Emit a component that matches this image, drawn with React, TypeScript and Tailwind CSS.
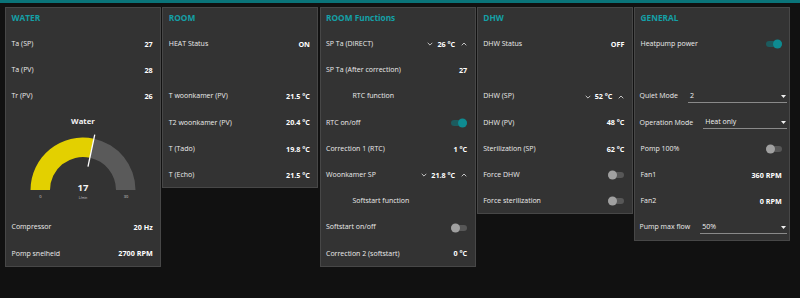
import type { ReactNode } from 'react';

const font = { fontFamily: '"Open Sans", "Liberation Sans", Arial, sans-serif' };

function Title({ children }: { children: ReactNode }) {
  return (
    <div className="flex h-[24.3px] items-center pb-[3px] pl-[5.5px] text-[8.3px] font-bold text-[#14a0a7]">
      {children}
    </div>
  );
}

function Row({ label, children }: { label?: string; children?: ReactNode }) {
  return (
    <div className="flex h-[24px] items-center justify-between pl-[5.5px] pr-[7.3px]">
      <span className="text-[7px] text-[#ececec]">{label}</span>
      {children}
    </div>
  );
}

function Value({ children }: { children: ReactNode }) {
  return <span className="text-[7.2px] font-bold text-white">{children}</span>;
}

function Chevron({ up }: { up?: boolean }) {
  return (
    <svg width="6" height="4" viewBox="0 0 6 4" className="text-[#d4d4d4]">
      <path
        d={up ? 'M0.7 3.3 L3 1 L5.3 3.3' : 'M0.7 0.8 L3 3.1 L5.3 0.8'}
        fill="none"
        stroke="currentColor"
        strokeWidth="0.9"
      />
    </svg>
  );
}

function Numeric({ value }: { value: string }) {
  return (
    <div className="flex items-center">
      <Chevron />
      <span className="ml-[4px] mr-[6px] text-[7.2px] font-bold text-white">{value}</span>
      <Chevron up />
    </div>
  );
}

function Toggle({ on }: { on?: boolean }) {
  return (
    <div className={`relative h-[6px] w-[16px] rounded-full ${on ? 'bg-[#1c5b5e]' : 'bg-[#575757]'}`}>
      <div
        className={`absolute top-1/2 h-[9px] w-[9px] -translate-y-1/2 rounded-full ${
          on ? 'right-0 bg-[#0e8b91]' : 'left-0 bg-[#a0a0a0]'
        }`}
      />
    </div>
  );
}

function Heading({ children }: { children: ReactNode }) {
  return (
    <div className="flex h-[24px] items-center pl-[32px] text-[7px] text-[#ececec]">{children}</div>
  );
}

function Dropdown({ label, value }: { label: string; value: string }) {
  return (
    <div className="flex h-[24px] items-center pl-[4.5px] pr-[2.5px]">
      <span className="text-[7px] text-[#ececec]">{label}</span>
      <div className="ml-[10px] flex h-[12px] flex-1 items-center justify-between border-b-[1.5px] border-[#8a8a8a] pl-[2px] pr-[1px]">
        <span className="text-[7px] text-[#f2f2f2]">{value}</span>
        <svg width="5" height="3" viewBox="0 0 5 3">
          <path d="M0 0 L5 0 L2.5 3 Z" fill="#f0f0f0" />
        </svg>
      </div>
    </div>
  );
}

function arc(cx: number, cy: number, R: number, r: number, a1: number, a2: number) {
  const p = (rad: number, a: number) => {
    const t = (a * Math.PI) / 180;
    return `${(cx + rad * Math.cos(t)).toFixed(2)} ${(cy - rad * Math.sin(t)).toFixed(2)}`;
  };
  return `M ${p(R, a1)} A ${R} ${R} 0 0 1 ${p(R, a2)} L ${p(r, a2)} A ${r} ${r} 0 0 0 ${p(r, a1)} Z`;
}

function Gauge() {
  const cx = 77;
  const cy = 79;
  const angle = 180 - (17 / 30) * 180;
  const t = (angle * Math.PI) / 180;
  return (
    <div className="h-[102.6px]">
      <svg width="154" height="103" viewBox="0 0 154 103">
        <text x={cx} y="13" textAnchor="middle" fontSize="7.8" fontWeight="bold" fill="#f2f2f2" style={font}>
          Water
        </text>
        <path d={arc(cx, cy, 52.5, 33, 180, angle)} fill="#e3d000" />
        <path d={arc(cx, cy, 52.5, 33, angle, 0)} fill="#5a5a5a" />
        <line
          x1={cx + 24 * Math.cos(t)}
          y1={cy - 24 * Math.sin(t)}
          x2={cx + 56.5 * Math.cos(t)}
          y2={cy - 56.5 * Math.sin(t)}
          stroke="#ffffff"
          strokeWidth="1.3"
        />
        <text x={cx} y="79.5" textAnchor="middle" fontSize="9.5" fontWeight="bold" fill="#f4f4f4" style={font}>
          17
        </text>
        <text x="34.5" y="86.5" textAnchor="middle" fontSize="4" fill="#cccccc" style={font}>
          0
        </text>
        <text x={cx} y="87.5" textAnchor="middle" fontSize="3.2" fill="#cccccc" style={font}>
          L/min
        </text>
        <text x="120" y="86.5" textAnchor="middle" fontSize="4" fill="#cccccc" style={font}>
          30
        </text>
      </svg>
    </div>
  );
}

function Panel({ title, children }: { title: string; children: ReactNode }) {
  return (
    <div className="w-[156px] shrink-0 border border-[#474747] bg-[#333333]">
      <Title>{title}</Title>
      <div className="flex flex-col gap-[2.2px]">{children}</div>
    </div>
  );
}

export default function App() {
  return (
    <div className="h-[298px] w-[800px] overflow-hidden bg-[#111111]" style={font}>
      <div className="h-[3px] bg-[#0a7479]" />
      <div className="flex items-start gap-[1.25px] pl-[5px] pt-[4px]">
        <Panel title="WATER">
          <Row label="Ta (SP)"><Value>27</Value></Row>
          <Row label="Ta (PV)"><Value>28</Value></Row>
          <Row label="Tr (PV)"><Value>26</Value></Row>
          <Gauge />
          <Row label="Compressor"><Value>20 Hz</Value></Row>
          <Row label="Pomp snelheid"><Value>2700 RPM</Value></Row>
        </Panel>

        <Panel title="ROOM">
          <Row label="HEAT Status"><Value>ON</Value></Row>
          <Row />
          <Row label="T woonkamer (PV)"><Value>21.5 °C</Value></Row>
          <Row label="T2 woonkamer (PV)"><Value>20.4 °C</Value></Row>
          <Row label="T (Tado)"><Value>19.8 °C</Value></Row>
          <Row label="T (Echo)"><Value>21.5 °C</Value></Row>
        </Panel>

        <Panel title="ROOM Functions">
          <Row label="SP Ta (DIRECT)"><Numeric value="26 °C" /></Row>
          <Row label="SP Ta (After correction)"><Value>27</Value></Row>
          <Heading>RTC function</Heading>
          <Row label="RTC on/off"><Toggle on /></Row>
          <Row label="Correction 1 (RTC)"><Value>1 °C</Value></Row>
          <Row label="Woonkamer SP"><Numeric value="21.8 °C" /></Row>
          <Heading>Softstart function</Heading>
          <Row label="Softstart on/off"><Toggle /></Row>
          <Row label="Correction 2 (softstart)"><Value>0 °C</Value></Row>
        </Panel>

        <Panel title="DHW">
          <Row label="DHW Status"><Value>OFF</Value></Row>
          <Row />
          <Row label="DHW (SP)"><Numeric value="52 °C" /></Row>
          <Row label="DHW (PV)"><Value>48 °C</Value></Row>
          <Row label="Sterilization (SP)"><Value>62 °C</Value></Row>
          <Row label="Force DHW"><Toggle /></Row>
          <Row label="Force sterilization"><Toggle /></Row>
        </Panel>

        <Panel title="GENERAL">
          <Row label="Heatpump power"><Toggle on /></Row>
          <Row />
          <Dropdown label="Quiet Mode" value="2" />
          <Dropdown label="Operation Mode" value="Heat only" />
          <Row label="Pomp 100%"><Toggle /></Row>
          <Row label="Fan1"><Value>360 RPM</Value></Row>
          <Row label="Fan2"><Value>0 RPM</Value></Row>
          <Dropdown label="Pump max flow" value="50%" />
        </Panel>
      </div>
    </div>
  );
}
